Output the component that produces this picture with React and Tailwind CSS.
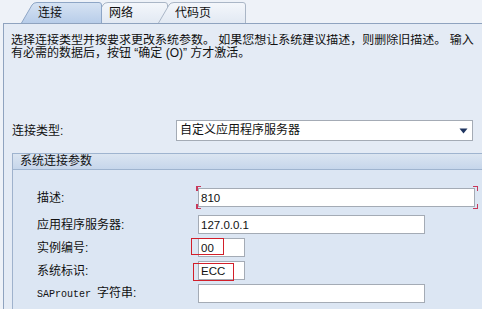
import React from "react";

const CJK = "font-['Liberation_Sans','Noto_Sans_CJK_SC',sans-serif]";

function Tab({ w, label, active, z, ml }) {
  const H = 21;
  const d = `M0.5,${H} L11,3 Q12.5,0.5 16,0.5 L${w - 3},0.5 Q${w - 0.5},0.5 ${w - 0.5},3 L${w - 0.5},${H}`;
  return (
    <div className={`relative h-[21px] ${z} ${ml}`} style={{ width: w }}>
      <svg className="absolute inset-0" width={w} height={H} viewBox={`0 0 ${w} ${H}`}>
        <defs>
          <linearGradient id={`g${label}`} x1="0" y1="0" x2="0" y2="1">
            <stop offset="0" stopColor={active ? "#d6e3f3" : "#f4f7fb"} />
            <stop offset="1" stopColor={active ? "#b8cde9" : "#e2e9f3"} />
          </linearGradient>
        </defs>
        <path d={d} fill={`url(#g${label})`} stroke={active ? "#8ea6c6" : "#aab6c6"} strokeWidth="1" />
      </svg>
      <span className="absolute left-[17px] top-[3px] text-[12px] leading-[16px] text-[#111]">{label}</span>
    </div>
  );
}

function Field({ label, mono, w, value, mt, extra }) {
  return (
    <div className={`flex items-center h-[19px] ${mt}`}>
      <div className="w-[185px] pl-[24px] text-[12px] leading-[14px] text-[#111] whitespace-nowrap">
        {mono ? (
          <>
            <span className="font-['Liberation_Mono',monospace] text-[10px]">SAProuter </span>
            <span>字符串:</span>
          </>
        ) : (
          label
        )}
      </div>
      <div className="relative h-[19px] bg-white border border-[#a4abb5]" style={{ width: w }}>
        <span className="absolute left-[2px] top-[2px] font-['Liberation_Sans',sans-serif] text-[11.5px] leading-[14px] text-[#111]">
          {value}
        </span>
        {extra}
      </div>
    </div>
  );
}

function Corners() {
  const c = "absolute w-[5px] h-[5px] border-[#c8385a]";
  return (
    <>
      <span className={`${c} left-[-3px] top-[-3px] border-l-2 border-t`} />
      <span className={`${c} right-[-4px] top-[-3px] border-r border-t`} />
      <span className={`${c} left-[-3px] bottom-[-3px] border-l-2 border-b`} />
      <span className={`${c} right-[-4px] bottom-[-3px] border-r border-b`} />
    </>
  );
}

export default function App() {
  return (
    <div className={`w-[482px] h-[309px] overflow-hidden bg-[#eef2f8] flex flex-col ${CJK}`}>
      <div className="h-[23px] flex items-end pl-[21px] shrink-0">
        <Tab w={81} label="连接" active z="z-30" ml="" />
        <Tab w={76} label="网络" z="z-10" ml="-ml-[10px]" />
        <Tab w={88} label="代码页" z="z-20" ml="-ml-[10px]" />
      </div>
      <div className="ml-[3px] flex-1 border-l border-t border-[#8fa3bf] bg-[#e4ebf5] pl-[7px] pt-[10px] relative z-0">
        <div className="text-[12px] leading-[13px] text-[#111] whitespace-nowrap overflow-hidden">
          <div>选择连接类型并按要求更改系统参数。 如果您想让系统建议描述，则删除旧描述。 输入</div>
          <div>有必需的数据后，按钮 “确定 (O)” 方才激活。</div>
        </div>
        <div className="flex items-center h-[21px] mt-[60px]">
          <div className="w-[165px] pl-[1px] text-[12px] leading-[14px] text-[#111]">连接类型:</div>
          <div className="relative w-[297px] h-[21px] bg-white border border-[#a4abb5]">
            <span className="absolute left-[3px] top-[2px] text-[12px] leading-[15px] text-[#111]">自定义应用程序服务器</span>
            <svg className="absolute right-[4px] top-[7px]" width="9" height="6" viewBox="0 0 9 6">
              <path d="M0.5,0.5 L8.5,0.5 L4.5,5.5 Z" fill="#1f3560" />
            </svg>
          </div>
        </div>
        <div className="mt-[12px] ml-[1px] w-[480px] border-l border-[#9fb2cc] bg-[#dce6f3] h-[160px]">
          <div className="h-[17px] border-t border-b border-[#9fb4cf] bg-gradient-to-b from-[#dbe5f1] to-[#c6d6eb] pl-[7px] text-[12px] leading-[15px] text-[#111]">
            系统连接参数
          </div>
          <div className="pt-[18px]">
            <Field label="描述:" w={277} value="810" mt="" extra={<Corners />} />
            <Field label="应用程序服务器:" w={227} value="127.0.0.1" mt="mt-[8px]" />
            <Field
              label="实例编号:"
              w={47}
              value="00"
              mt="mt-[4px]"
              extra={<span className="absolute left-[-8px] top-[-1px] w-[33px] h-[17px] border border-[#d21f2a]" />}
            />
            <Field
              label="系统标识:"
              w={47}
              value="ECC"
              mt="mt-[4px]"
              extra={<span className="absolute left-[-6px] top-[1px] w-[41px] h-[18px] border border-[#d21f2a]" />}
            />
            <Field mono w={227} value="" mt="mt-[4px]" />
          </div>
        </div>
      </div>
    </div>
  );
}
